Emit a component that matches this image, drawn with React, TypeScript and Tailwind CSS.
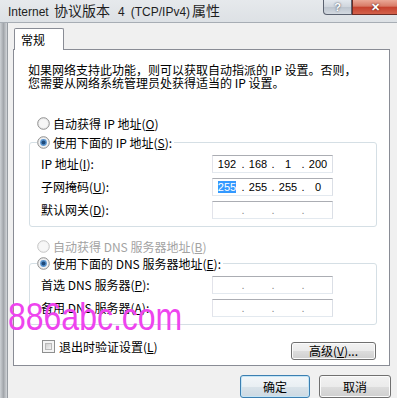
import React from "react";

function Radio({ checked = false, disabled = false }: { checked?: boolean; disabled?: boolean }) {
  return (
    <svg width="13" height="13" viewBox="0 0 13 13" className="shrink-0">
      <circle cx="6.5" cy="6.5" r="5.8" fill={disabled ? "#f4f4f4" : "#ececec"} stroke={disabled ? "#c4c4c4" : "#8f8f8f"} strokeWidth="1" />
      <circle cx="6.5" cy="6.5" r="4.3" fill={disabled ? "#f7f7f7" : "#f6f6f6"} />
      {checked && (
        <>
          <circle cx="6.5" cy="6.5" r="3.4" fill="#5b95cf" />
          <circle cx="6.5" cy="6.5" r="2" fill="#1f4a7a" />
        </>
      )}
    </svg>
  );
}

function Checkbox() {
  return (
    <div className="w-[13px] h-[13px] shrink-0 border border-[#8e8f8f] bg-[#f4f4f4] p-[2px]">
      <div className="w-full h-full border border-[#b9b9b9] bg-linear-to-br from-[#cfcfcf] to-[#f4f4f4]" />
    </div>
  );
}

function IpBox({ parts, highlightFirst = false }: { parts?: string[]; highlightFirst?: boolean }) {
  const p = parts ?? ["", "", "", ""];
  const dotColor = parts ? "text-black" : "text-[#8a8a8a]";
  return (
    <div className="flex items-center w-[121px] h-[18px] border border-[#abadb3] border-l-[#e2e3ea] border-r-[#dbdfe6] border-b-[#e3e9ef] bg-white text-[11px] leading-[12px] font-['Liberation_Sans',sans-serif]">
      <div className="w-[28px] text-center">
        {highlightFirst ? <span className="bg-[#3399ff] text-white">{p[0]}</span> : p[0]}
      </div>
      <div className={`w-[4px] text-center ${dotColor}`}>.</div>
      <div className="w-[26px] text-center">{p[1]}</div>
      <div className={`w-[4px] text-center ${dotColor}`}>.</div>
      <div className="w-[26px] text-center">{p[2]}</div>
      <div className={`w-[4px] text-center ${dotColor}`}>.</div>
      <div className="w-[26px] text-center">{p[3]}</div>
    </div>
  );
}

function Row({ label, children, first = false }: { label: React.ReactNode; children: React.ReactNode; first?: boolean }) {
  return (
    <div className={`flex items-center h-[18px] ${first ? "mt-[4px]" : "mt-[5px]"}`}>
      <div className="w-[182px] pl-[11px] whitespace-nowrap">{label}</div>
      {children}
    </div>
  );
}

const btn =
  "flex items-center justify-center rounded-[3px] border border-[#707070] bg-[linear-gradient(#f2f2f2,#ebebeb_50%,#dddddd_50%,#cfcfcf)] shadow-[inset_0_0_0_1px_#fbfbfb]";

export default function App() {
  return (
    <div className="relative w-[397px] h-[398px] overflow-hidden bg-[#f0f0f0] text-[12px] leading-[13px] text-black font-['Noto_Sans_CJK_SC',sans-serif]">
      {/* title bar */}
      <div className="flex h-[23px] border-b border-[#a7adb4] bg-linear-to-b from-[#e6e9ec] to-[#dde1e5]">
        <div className="pl-[8px] pt-[3px] whitespace-nowrap text-[12px] leading-[14px] text-[#1e1e1e] font-['Liberation_Sans','Noto_Sans_CJK_SC',sans-serif]">
          Internet <span className="ml-[2px] text-[14px] font-['Noto_Sans_CJK_SC',sans-serif]">协议版本</span>
          <span className="ml-[8px]">4</span>
          <span className="ml-[6px]">(TCP/IPv4)</span>
          <span className="ml-[2px] text-[14px] font-['Noto_Sans_CJK_SC',sans-serif]">属性</span>
        </div>
        <div className="ml-auto flex items-start">
          <div className="w-[29px] h-[15px] border border-t-0 border-[#5b6270] rounded-bl-[4px] bg-[linear-gradient(#e3e8ee,#cfd5dc_50%,#bcc4ce_50%,#d3d9e0)] flex items-center justify-center text-[11px] leading-[11px] font-bold text-white font-['Liberation_Sans',sans-serif] [text-shadow:0_0_2px_#2b3340]">
            ?
          </div>
          <div className="w-[45px] h-[15px] border border-t-0 border-r-0 border-[#6d2c24] bg-[linear-gradient(#eaa896,#d87a66_45%,#c5412d_50%,#d3614b)] flex items-center justify-center text-[11px] leading-[11px] font-bold text-white font-['Liberation_Sans',sans-serif] [text-shadow:0_0_2px_#4a120a]">
            ✕
          </div>
        </div>
      </div>

      {/* body */}
      <div className="flex h-[375px]">
        <div className="w-[8px] shrink-0 bg-linear-to-r from-[#cdd1d5] via-[#a2a6ab] to-[#d3d6da] border-r border-[#979ca2]" />
        <div className="flex-1 flex flex-col pt-[5px]">
          {/* tab */}
          <div className="relative z-10 -mb-px ml-[6px] w-[50px] h-[22px] border border-b-0 border-[#898c95] rounded-t-[2px] bg-white pl-[6px] pt-[4px]">
            常规
          </div>
          {/* panel */}
          <div className="ml-[5px] w-[377px] h-[325px] border border-[#898c95] bg-white flex flex-col">
            <div className="pl-[14px] pt-[13px] whitespace-nowrap">
              <div>如果网络支持此功能，则可以获取自动指派的 IP 设置。否则，</div>
              <div>您需要从网络系统管理员处获得适当的 IP 设置。</div>
            </div>

            <div className="mt-[27px] ml-[23px] flex items-center h-[16px] gap-[3px]">
              <Radio />
              <span>
                自动获得 IP 地址(<u>O</u>)
              </span>
            </div>

            <fieldset className="mt-[3px] ml-[15px] w-[348px] border border-[#d5dfe5] rounded-[3px] pb-[7px]">
              <legend className="ml-[7px] pr-[2px]">
                <span className="flex items-center h-[16px] gap-[3px]">
                  <Radio checked />
                  <span>
                    使用下面的 IP 地址(<u>S</u>):
                  </span>
                </span>
              </legend>
              <Row first label={<>IP 地址(<u>I</u>):</>}>
                <IpBox parts={["192", "168", "1", "200"]} />
              </Row>
              <Row label={<>子网掩码(<u>U</u>):</>}>
                <IpBox parts={["255", "255", "255", "0"]} highlightFirst />
              </Row>
              <Row label={<>默认网关(<u>D</u>):</>}>
                <IpBox />
              </Row>
            </fieldset>

            <div className="mt-[12px] ml-[23px] flex items-center h-[16px] gap-[3px] text-[#a3a3a3]">
              <Radio disabled />
              <span>
                自动获得 DNS 服务器地址(<u>B</u>)
              </span>
            </div>

            <fieldset className="mt-[1px] ml-[15px] w-[348px] border border-[#d5dfe5] rounded-[3px] pb-[7px]">
              <legend className="ml-[7px] pr-[2px]">
                <span className="flex items-center h-[16px] gap-[3px]">
                  <Radio checked />
                  <span>
                    使用下面的 DNS 服务器地址(<u>E</u>):
                  </span>
                </span>
              </legend>
              <div className="mt-[1px]" />
              <Row first label={<>首选 DNS 服务器(<u>P</u>):</>}>
                <IpBox />
              </Row>
              <Row label={<>备用 DNS 服务器(<u>A</u>):</>}>
                <IpBox />
              </Row>
            </fieldset>

            <div className="mt-[15px] flex items-start">
              <div className="ml-[28px] flex items-center h-[14px] gap-[4px]">
                <Checkbox />
                <span>
                  退出时验证设置(<u>L</u>)
                </span>
              </div>
              <div className={`ml-auto mr-[13px] mt-[2px] w-[85px] h-[18px] ${btn}`}>
                高级(<u>V</u>)...
              </div>
            </div>
          </div>

          {/* bottom buttons */}
          <div className="mt-[9px] flex justify-end gap-[9px] pr-[6px]">
            <div className="w-[70px] h-[23px] flex items-center justify-center rounded-[3px] border border-[#3c7fb1] bg-[linear-gradient(#f2f6f9,#e9eff3_50%,#d9e3ea_50%,#cdd9e2)] shadow-[inset_0_0_0_1px_#c4e5f6]">
              确定
            </div>
            <div className={`w-[72px] h-[23px] ${btn}`}>取消</div>
          </div>
        </div>
      </div>

      {/* watermark */}
      <div className="absolute left-[8px] top-[297px] text-[39px] leading-none text-[#ee44ee] scale-x-[0.82] origin-left font-['Liberation_Sans',sans-serif] whitespace-nowrap">
        886abc.com
      </div>
    </div>
  );
}
